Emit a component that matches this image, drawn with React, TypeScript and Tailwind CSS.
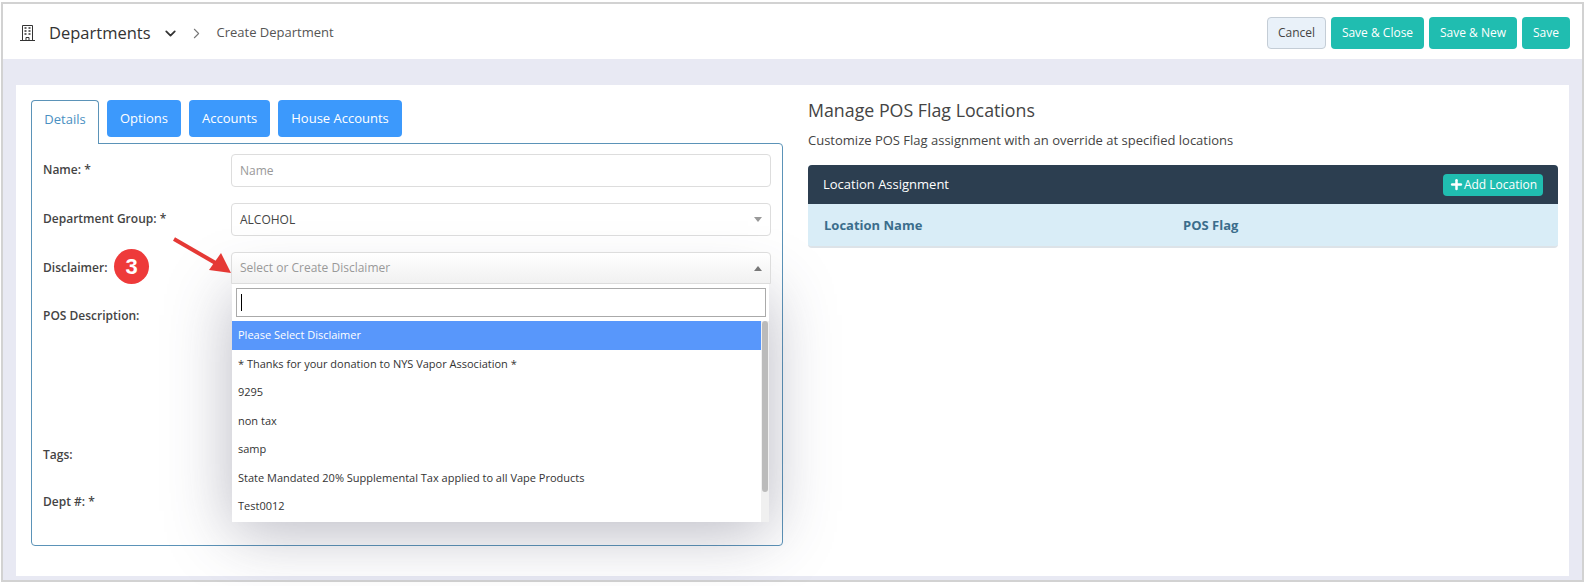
import { ChevronDown, ChevronRight, Plus } from "lucide-react";

const tabs = ["Options", "Accounts", "House Accounts"];
const options = [
  "* Thanks for your donation to NYS Vapor Association *",
  "9295",
  "non tax",
  "samp",
  "State Mandated 20% Supplemental Tax applied to all Vape Products",
  "Test0012",
];

function Caret({ up }: { up?: boolean }) {
  return (
    <span
      className={
        up
          ? "border-x-[4px] border-x-transparent border-b-[5px] border-b-[#777]"
          : "border-x-[4px] border-x-transparent border-t-[5px] border-t-[#999]"
      }
    />
  );
}

function BuildingIcon() {
  return (
    <svg className="h-[16px] w-[15px]" viewBox="0 0 15 16" fill="none" stroke="#333">
      <path d="M2.5 15.5V0.5H12.5V15.5M0 15.5H15M6 15.5V12.5H9V15.5" />
      <path d="M4.5 3h2M8.5 3h2M4.5 6h2M8.5 6h2M4.5 9h2M8.5 9h2" strokeWidth="1.6" />
    </svg>
  );
}

function Label({ children }: { children: string }) {
  return <label className="block w-[188px] shrink-0 pt-[7px] text-[12px] font-semibold text-[#444]">{children}</label>;
}

function DisclaimerMenu() {
  return (
    <div className="absolute left-[200px] top-[140px] z-10 flex h-[238px] w-[537px] flex-col bg-white shadow-[0_10px_60px_rgba(60,60,90,0.36)]">
      <div className="px-1 pt-1">
        <div className="flex h-[29px] w-[530px] items-center border border-[#aaa] px-1">
          <span className="h-[17px] w-px bg-black" />
        </div>
      </div>
      <div className="mt-1 flex min-h-0 flex-1">
        <ul className="w-[529px] text-[11px] text-[#333]">
          <li className="flex h-[29px] items-center bg-[#5897fb] px-1.5 text-white">Please Select Disclaimer</li>
          {options.map((o) => (
            <li key={o} className="flex h-[28.4px] items-center px-1.5">
              {o}
            </li>
          ))}
        </ul>
        <div className="w-[8px] bg-[#f0f0f0] pl-px">
          <div className="h-[171px] w-[6px] rounded-sm bg-[#bbb]" />
        </div>
      </div>
    </div>
  );
}

function DetailsForm() {
  return (
    <div className="relative mt-[-1px] h-[403px] w-[752px] rounded-b-sm rounded-tr-sm border border-[#5b93b8] pl-[11px] pr-[11px] pt-[10px]">
      <div className="flex h-[49px] items-start">
        <Label>Name: *</Label>
        <div className="flex h-[33px] flex-1 items-center rounded border border-[#ddd] px-2 text-[12px] text-[#999]">Name</div>
      </div>
      <div className="flex h-[49px] items-start">
        <Label>Department Group: *</Label>
        <div className="flex h-[33px] flex-1 items-center justify-between rounded border border-[#ddd] px-2 text-[12px] text-[#444]">
          ALCOHOL
          <Caret />
        </div>
      </div>
      <div className="flex h-[48px] items-start">
        <Label>Disclaimer:</Label>
        <div className="relative z-20 flex h-[32px] flex-1 items-center justify-between rounded-t border border-[#ddd] bg-gradient-to-b from-white to-[#f1f1f1] px-2 text-[12px] text-[#999]">
          Select or Create Disclaimer
          <Caret up />
        </div>
      </div>
      <div className="h-[139px]">
        <Label>POS Description:</Label>
      </div>
      <div className="h-[47px]">
        <Label>Tags:</Label>
      </div>
      <Label>Dept #: *</Label>
      <DisclaimerMenu />
    </div>
  );
}

export default function App() {
  return (
    <div className="h-[586px] w-[1588px] bg-white px-[1px] pt-[2px] font-['Open_Sans','Noto_Sans',sans-serif]">
      <div className="relative h-[580px] w-[1583px] border-2 border-[#d2d2d2] bg-[#e8e9f3]">
        <header className="flex h-[55px] items-center justify-between bg-white pl-[17px] pr-[12px] pt-[3px]">
          <div className="flex items-center text-[#333]">
            <BuildingIcon />
            <span className="ml-[14px] text-[16.5px]">Departments</span>
            <ChevronDown className="ml-[11px] h-[17px] w-[17px]" strokeWidth={2.5} />
            <ChevronRight className="ml-[9px] h-[17px] w-[17px] text-[#777]" strokeWidth={1.5} />
            <span className="ml-[12px] text-[13px] text-[#555]">Create Department</span>
          </div>
          <div className="flex items-center gap-[5px] text-[12px]">
            <button className="h-[32px] w-[59px] rounded-sm border border-[#c4cdd6] bg-[#e9f1f9] text-[#444]">Cancel</button>
            <button className="h-[32px] w-[93px] rounded-sm bg-[#20bdb0] text-white">Save &amp; Close</button>
            <button className="h-[32px] w-[88px] rounded-sm bg-[#20bdb0] text-white">Save &amp; New</button>
            <button className="h-[32px] w-[48px] rounded-sm bg-[#20bdb0] text-white">Save</button>
          </div>
        </header>
        <main className="mx-[13px] mt-[26px] flex h-[491px] bg-white pl-[15px] pt-[15px]">
          <section className="w-[777px] shrink-0">
            <div className="flex items-start gap-2 text-[13px]">
              <div className="relative z-[1] flex h-[44px] w-[68px] items-start justify-center rounded-t-sm border border-b-0 border-[#5b93b8] bg-white pt-[9px] text-[#4a90c2]">
                Details
              </div>
              {tabs.map((t) => (
                <button key={t} className="h-[37px] rounded-sm bg-[#3c99fc] px-[13px] text-white">
                  {t}
                </button>
              ))}
            </div>
            <DetailsForm />
          </section>
          <section className="w-[750px]">
            <h2 className="mt-[-2px] text-[17.8px] font-normal leading-[24px] text-[#444]">Manage POS Flag Locations</h2>
            <p className="mt-[8px] text-[13px] leading-[20px] text-[#444]">Customize POS Flag assignment with an override at specified locations</p>
            <div className="mt-[15px] overflow-hidden rounded border-b-2 border-[#dde3e8] bg-[#d9edf7]">
              <div className="flex h-[39px] items-center justify-between bg-[#2c3e50] px-[15px] text-[13px] text-white">
                Location Assignment
                <button className="flex h-[22px] w-[100px] items-center justify-center rounded-sm bg-[#20bdb0] text-[12px]">
                  <Plus className="h-[15px] w-[15px]" strokeWidth={4} />
                  Add Location
                </button>
              </div>
              <div className="flex h-[42px] items-center pl-[16px] pt-[1px] text-[13px] font-bold text-[#3b6d8c]">
                <span className="w-[359px]">Location Name</span>
                <span>POS Flag</span>
              </div>
            </div>
          </section>
        </main>
        <svg className="absolute left-[168px] top-[233px] z-20 h-[40px] w-[66px]" viewBox="0 0 66 40">
          <path d="M3 2 L48 28" stroke="#e53935" strokeWidth="4" fill="none" />
          <path d="M60 36 L38 33 L50 16 Z" fill="#e53935" />
        </svg>
        <span className="absolute left-[111px] top-[245px] z-20 flex h-[35px] w-[35px] items-center justify-center rounded-full bg-[#ee3a3a] font-['Liberation_Sans',sans-serif] text-[22px] font-bold text-white">
          3
        </span>
      </div>
    </div>
  );
}
